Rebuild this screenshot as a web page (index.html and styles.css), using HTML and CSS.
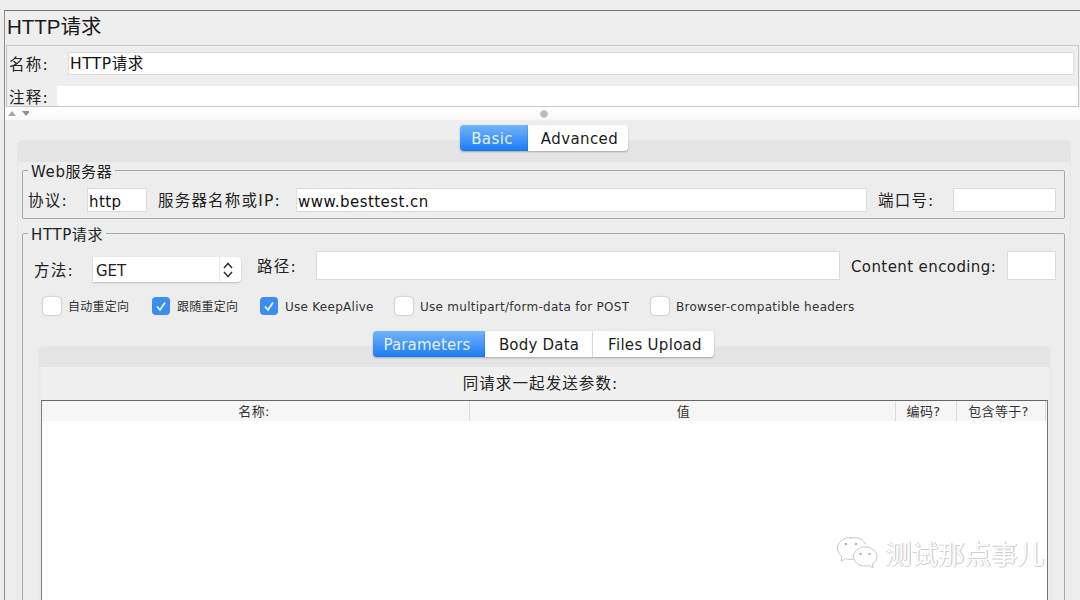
FILE: index.html
```html
<!DOCTYPE html>
<html lang="zh">
<head>
<meta charset="utf-8">
<title>HTTP请求</title>
<link rel="stylesheet" href="styles.css">
</head>
<body>
<div class="frame">
  <div class="title">HTTP请求</div>
  <div class="namepanel">
    <div class="namerow">
      <span class="namelabel">名称:</span>
      <div class="field nameinput">HTTP请求</div>
    </div>
    <div class="commentrow">
      <span class="commentlabel">注释:</span>
      <div class="commentinput"></div>
    </div>
  </div>
  <div class="splitter">
    <svg class="arrows" width="24" height="8" viewBox="0 0 24 8"><path d="M3 7 7 2 11 7Z" fill="#a9a9a9"/><path d="M18 2h8l-4 5Z" transform="translate(-1 0)" fill="#8f8f8f"/></svg>
    <span class="grip"></span>
  </div>
  <div class="main">
    <div class="tabs tabs-outer">
      <span class="tab selected tab-basic">Basic</span>
      <span class="tab tab-advanced">Advanced</span>
    </div>
    <div class="pane">
      <fieldset class="group group-web">
        <legend>Web服务器</legend>
        <div class="row">
          <span class="lab cjk lab-proto">协议:</span>
          <div class="field f-proto">http</div>
          <span class="lab cjk lab-host">服务器名称或IP:</span>
          <div class="field f-host">www.besttest.cn</div>
          <span class="lab cjk lab-port">端口号:</span>
          <div class="field f-port"></div>
        </div>
      </fieldset>
      <fieldset class="group group-http">
        <legend>HTTP请求</legend>
        <div class="row row-method">
          <span class="lab cjk lab-method">方法:</span>
          <div class="select">
            <span class="select-value">GET</span>
            <span class="select-arrows">
              <svg width="12" height="18" viewBox="0 0 12 18"><path d="M2 7 6 2.500 10 7M2 11 6 15.500 10 11" fill="none" stroke="#333" stroke-width="1.500"/></svg>
            </span>
          </div>
          <span class="lab cjk lab-path">路径:</span>
          <div class="field f-path"></div>
          <span class="lab lab-enc">Content encoding:</span>
          <div class="field f-enc"></div>
        </div>
        <div class="checks">
          <span class="check c1"><i class="box"></i>自动重定向</span>
          <span class="check c2"><i class="box on"><svg width="18" height="18" viewBox="0 0 18 18"><path d="M5 9.500 8 13 13 5.500" fill="none" stroke="#fff" stroke-width="1.600"/></svg></i>跟随重定向</span>
          <span class="check c3"><i class="box on"><svg width="18" height="18" viewBox="0 0 18 18"><path d="M5 9.500 8 13 13 5.500" fill="none" stroke="#fff" stroke-width="1.600"/></svg></i>Use KeepAlive</span>
          <span class="check c4"><i class="box"></i>Use multipart/form-data for POST</span>
          <span class="check c5"><i class="box"></i>Browser-compatible headers</span>
        </div>
        <div class="tabs tabs-inner">
          <span class="tab selected tab-param">Parameters</span>
          <span class="tab tab-body">Body Data</span>
          <span class="tab tab-files">Files Upload</span>
        </div>
        <div class="pane pane-inner">
          <div class="params">
            <div class="params-title">同请求一起发送参数:</div>
            <div class="table">
              <div class="thead">
                <span class="th th-name">名称:</span>
                <span class="th th-value">值</span>
                <span class="th th-enc">编码?</span>
                <span class="th th-eq">包含等于?</span>
              </div>
              <div class="tbody"></div>
            </div>
          </div>
        </div>
      </fieldset>
    </div>
  </div>
</div>
<div class="watermark">
  <svg width="42" height="33" viewBox="0 0 42 33"><g fill="#fff" stroke="#c8c8c8" stroke-width="1"><path d="M15 1.500C7.500 1.500 1.500 6.500 1.500 12.500c0 3.300 1.800 6 4.500 8L5 25l4.500-2.400c1.800.6 3.600.9 5.500.9 1.500 0 3-.2 4-.5"/><path d="M14 2.500c5-2 13-.5 15.500 6"/><path d="M29 11c-6.500 0-11.500 4.300-11.500 9.500S22.500 30 29 30c1.300 0 2.600-.2 3.800-.6L37 32l-.7-4c3-1.700 4.700-4.300 4.700-7.500C41 15.300 35.500 11 29 11Z"/></g><g fill="#b5b5b5"><circle cx="10" cy="8" r="1.300"/><circle cx="20" cy="8" r="1.300"/><circle cx="24.500" cy="18" r="1.200"/><circle cx="33.500" cy="18" r="1.200"/></g></svg>
  <span class="wm-text">测试那点事儿</span>
</div>
</body>
</html>
```
FILE: styles.css
```css
* { box-sizing: border-box; }
html, body { margin: 0; height: 600px; overflow: hidden; }
body {
  position: relative;
  background: #eeeeee;
  color: #222;
  font-family: "DejaVu Sans", "Noto Sans CJK SC", sans-serif;
  font-size: 14px;
}
.frame {
  margin: 10px 0 0 4px;
  height: 590px;
  overflow: hidden;
  border-top: 1px solid #737373;
  border-left: 1px solid #8c8c8c;
}
.title {
  height: 34px;
  padding-left: 2px;
  font-size: 20.500px;
  line-height: 32px;
  color: #1a1a1a;
  font-family: "Liberation Sans", "Noto Sans CJK SC", sans-serif;
}
.namepanel {
  height: 62px;
  margin: 0 1px 0 1px;
  border: 1px solid #c6c6c6;
  display: flex;
  flex-direction: column;
}
.namerow { height: 40px; flex: none; display: flex; padding: 6px 4px 0 2px; }
.namelabel { width: 59px; height: 23px; line-height: 27px; font-size: 15.500px; letter-spacing: 1.200px; }
.field {
  background: #fff;
  border: 1px solid #dcdcdc;
  padding-left: 1px;
  color: #111;
  white-space: nowrap;
}
.nameinput { flex: 1; height: 23px; line-height: 23px; font-size: 15.500px; letter-spacing: .5px; }
.commentrow { height: 20px; flex: none; display: flex; padding-left: 2px; }
.commentlabel { width: 48px; height: 20px; line-height: 24px; font-size: 15.500px; letter-spacing: 1.200px; }
.commentinput { flex: 1; height: 20px; background: #fff; }
.splitter {
  position: relative;
  height: 13px;
  background: linear-gradient(#ffffff, #f9f9f9);
  display: flex;
  justify-content: center;
  align-items: center;
  padding-left: 3px;
}
.arrows { position: absolute; left: 0; top: 2px; }
.grip { width: 8px; height: 8px; border-radius: 50%; background: #bcbcbc; border: 1px solid #c8c8c8; }

.main { padding: 5px 9px 0 12px; }
.tabs { display: flex; justify-content: center; position: relative; z-index: 1; }
.tabs-outer { margin-bottom: -11px; }
.tab {
  height: 26px;
  line-height: 28px;
  background: #fff;
  font-size: 15px;
  letter-spacing: .4px;
  text-align: center;
  color: #1c1c1c;
  box-shadow: 0 1px 2px rgba(0,0,0,.28);
  border-right: 1px solid #e8e8e8;
}
.tab:first-child { border-radius: 4px 0 0 4px; }
.tab:last-child { border-radius: 0 4px 4px 0; border-right: 0; }
.tab.selected {
  background: linear-gradient(#71b5fb, #1b7bf5);
  color: #e6f0ff;
  border-right: 0;
}
.tab-basic { width: 68px; padding-right: 4px; }
.tab-advanced { width: 100px; padding-left: 3px; }
.tab-param { width: 112px; padding-right: 3px; letter-spacing: .1px; }
.tab-body { width: 108px; padding-left: 2px; letter-spacing: .2px; }
.tab-files { width: 121px; padding-left: 4px; letter-spacing: .3px; }

.pane {
  background: linear-gradient(#e4e4e4 21px, #ededed 21px);
  border-radius: 5px 5px 0 0;
  border: 1px solid #e6e6e6;
  border-bottom: 0;
  padding: 19px 5px 0 4px;
  height: 460px;
}
.group {
  margin: 0;
  min-width: 0;
  padding: 0 8px 6px 5px;
  border: 1px solid #a9a9a9;
  border-radius: 2px;
}
.group legend {
  margin-left: 0;
  padding: 0 3px 0 3px;
  height: 20px;
  line-height: 24px;
  font-size: 15px;
  letter-spacing: .6px;
  color: #222;
}
.group-http { margin-top: 4px; height: 400px; }
.row { display: flex; align-items: flex-start; padding-top: 8px; }
.lab { height: 24px; white-space: nowrap; font-size: 15px; letter-spacing: .4px; line-height: 27px; }
.lab.cjk { font-size: 15.500px; letter-spacing: 1.200px; }
.f-proto, .f-host, .f-port, .f-path, .f-enc { height: 24px; line-height: 26px; font-size: 15px; letter-spacing: .45px; }
.lab-proto { width: 59px; }
.f-proto { width: 60px; }
.lab-host { margin-left: 11px; width: 138px; }
.f-host { flex: 1; }
.lab-port { margin-left: 11px; width: 75px; }
.f-port { width: 103px; }

.row-method { height: 39px; }
.row-method .f-path, .row-method .f-enc { height: 29px; }
.row-method .lab { height: 29px; line-height: 32px; }
.row-method .lab-method { width: 65px; height: 25px; margin-top: 6px; padding-left: 6px; line-height: 29px; }
.select {
  margin-top: 6px;
  width: 148px;
  height: 25px;
  display: flex;
  background: #fff;
  border-radius: 0 4px 4px 0;
  box-shadow: 0 1px 2px rgba(0,0,0,.2);
  font-size: 15px;
  line-height: 28px;
}
.select-value { width: 126px; padding-left: 3px; }
.select-arrows { flex: 1; display: flex; align-items: center; padding-left: 2px; border-left: 1px solid #ececec; }
.lab-path { margin-left: 16px; width: 59px; }
.f-path { flex: 1; }
.lab-enc { margin-left: 11px; width: 156px; }
.f-enc { width: 49px; }

.checks { display: flex; margin-top: 15px; height: 18px; font-size: 12px; letter-spacing: .27px; line-height: 20px; }
.check { display: flex; white-space: nowrap; color: #333; }
.box {
  display: block;
  width: 18px;
  height: 18px;
  margin-right: 7px;
  background: #fff;
  border-radius: 4px;
  box-shadow: 0 0 2px rgba(0,0,0,.35);
}
.box.on { background: #3a8ef2; box-shadow: none; }
.box svg { display: block; }
.c1 { margin-left: 15px; width: 109px; }
.c2 { width: 108px; }
.c3 { width: 135px; }
.c4 { width: 256px; }

.tabs-inner { margin-top: 16px; margin-bottom: -11px; padding-left: 2px; }
.pane-inner {
  margin: 0 5px 0 10px;
  padding: 20px 2px 0 2px;
  height: 300px;
}
.params { background: #f0f0f0; height: 280px; }
.params-title { height: 33px; padding-right: 8px; text-align: center; font-size: 15.500px; letter-spacing: 1.100px; line-height: 35px; }
.table {
  height: 240px;
  border: 1px solid #777;
  border-top: 1px solid #666;
  background: #fff;
}
.thead {
  height: 20px;
  display: flex;
  background: #f6f6f6;
  font-size: 13px;
  letter-spacing: .3px;
  line-height: 21px;
  color: #333;
}
.th { text-align: center; border-right: 1px solid #dcdcdc; }
.th-name { width: 428px; padding-right: 3px; }
.th-value { width: 426px; padding-left: 2px; }
.th-enc { width: 61px; padding-right: 5px; }
.th-eq { width: 89px; padding-right: 5px; }

.watermark {
  position: absolute;
  left: 836px;
  top: 536px;
  display: flex;
  align-items: center;
  gap: 7px;
}
.wm-text {
  font-family: "Noto Sans CJK SC", sans-serif;
  font-size: 26.500px;
  line-height: 32px;
  color: #fff;
  text-shadow: 1px 0 0 #c4c4c4, 0 1px 0 #d0d0d0;
}
```
